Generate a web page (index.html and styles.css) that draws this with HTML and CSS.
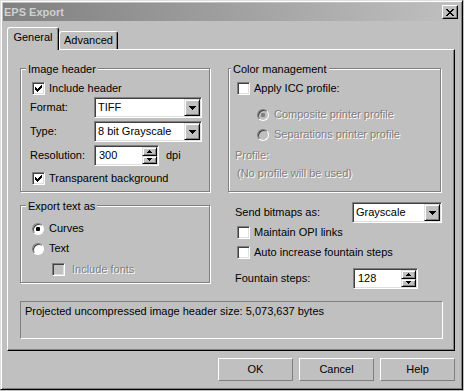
FILE: index.html
```html
<!DOCTYPE html>
<html lang="en">
<head>
  <meta charset="UTF-8">
  <title>EPS Export</title>
  <link rel="stylesheet" href="styles.css">
</head>
<body>

  <div class="window">
    <div class="titlebar">
      <span class="title">EPS Export</span>
      <span class="close-btn">
        <svg width="8" height="7" viewBox="0 0 8 7"><path d="M0 0h2v1H0zM6 0h2v1H6zM1 1h2v1H1zM5 1h2v1H5zM2 2h4v1H2zM3 3h2v1H3zM2 4h4v1H2zM1 5h2v1H1zM5 5h2v1H5zM0 6h2v1H0zM6 6h2v1H6z"/></svg>
      </span>
    </div>

    <div class="tabs">
      <div class="tab active">General</div>
      <div class="tab">Advanced</div>
    </div>

    <div class="panel">
      <div class="columns">

        <!-- left column -->
        <div class="col">
          <div class="group group-image">
            <div class="group-title">Image header</div>
            <div class="check-row gap-6">
              <span class="check"><svg width="11" height="11" viewBox="1 1 11 11"><path d="M3 5h1v3H3zM4 6h1v3H4zM5 7h1v3H5zM6 6h1v3H6zM7 5h1v3H7zM8 4h1v3H8zM9 3h1v3H9z"/></svg></span>
              <span>Include header</span>
            </div>
            <div class="field-row first">
              <span class="field-label">Format:</span>
              <div class="combo w-108">
                <span class="combo-text">TIFF</span>
                <span class="drop-btn"><svg width="7" height="4" viewBox="0 0 7 4"><path d="M0 0h7v1H0zM1 1h5v1H1zM2 2h3v1H2zM3 3h1v1H3z"/></svg></span>
              </div>
            </div>
            <div class="field-row">
              <span class="field-label">Type:</span>
              <div class="combo w-108">
                <span class="combo-text">8 bit Grayscale</span>
                <span class="drop-btn"><svg width="7" height="4" viewBox="0 0 7 4"><path d="M0 0h7v1H0zM1 1h5v1H1zM2 2h3v1H2zM3 3h1v1H3z"/></svg></span>
              </div>
            </div>
            <div class="field-row">
              <span class="field-label">Resolution:</span>
              <div class="spin">
                <span class="spin-text">300</span>
                <span class="spin-btns">
                  <span class="spin-btn"><svg width="5" height="3" viewBox="0 0 5 3"><path d="M2 0h1v1H2zM1 1h3v1H1zM0 2h5v1H0z"/></svg></span>
                  <span class="spin-btn"><svg width="5" height="3" viewBox="0 0 5 3"><path d="M0 0h5v1H0zM1 1h3v1H1zM2 2h1v1H2z"/></svg></span>
                </span>
              </div>
              <span class="unit">dpi</span>
            </div>
            <div class="check-row gap-6">
              <span class="check"><svg width="11" height="11" viewBox="1 1 11 11"><path d="M3 5h1v3H3zM4 6h1v3H4zM5 7h1v3H5zM6 6h1v3H6zM7 5h1v3H7zM8 4h1v3H8zM9 3h1v3H9z"/></svg></span>
              <span>Transparent background</span>
            </div>
          </div>

          <div class="group group-text">
            <div class="group-title">Export text as</div>
            <div class="radio-row gap-9">
              <span class="radio"><span class="dot"></span></span>
              <span>Curves</span>
            </div>
            <div class="radio-row gap-7">
              <span class="radio"></span>
              <span>Text</span>
            </div>
            <div class="check-row fonts-row">
              <span class="check disabled"></span>
              <span class="disabled-text">Include fonts</span>
            </div>
          </div>
        </div>

        <!-- right column -->
        <div class="col">
          <div class="group group-color">
            <div class="group-title">Color management</div>
            <div class="check-row gap-6">
              <span class="check"></span>
              <span>Apply ICC profile:</span>
            </div>
            <div class="radio-row indent gap-13">
              <span class="radio disabled"><span class="dot"></span></span>
              <span class="disabled-text">Composite printer profile</span>
            </div>
            <div class="radio-row indent gap-7">
              <span class="radio disabled"></span>
              <span class="disabled-text">Separations printer profile</span>
            </div>
            <div class="disabled-text profile-label">Profile:</div>
            <div class="disabled-text profile-note">(No profile will be used)</div>
          </div>

          <div class="right-row send-row">
            <span class="right-label">Send bitmaps as:</span>
            <div class="combo w-90">
              <span class="combo-text">Grayscale</span>
              <span class="drop-btn"><svg width="7" height="4" viewBox="0 0 7 4"><path d="M0 0h7v1H0zM1 1h5v1H1zM2 2h3v1H2zM3 3h1v1H3z"/></svg></span>
            </div>
          </div>
          <div class="check-row right-check gap-3">
            <span class="check"></span>
            <span>Maintain OPI links</span>
          </div>
          <div class="check-row right-check gap-7">
            <span class="check"></span>
            <span>Auto increase fountain steps</span>
          </div>
          <div class="right-row steps-row">
            <span class="right-label wide">Fountain steps:</span>
            <div class="spin">
              <span class="spin-text">128</span>
              <span class="spin-btns">
                <span class="spin-btn"><svg width="5" height="3" viewBox="0 0 5 3"><path d="M2 0h1v1H2zM1 1h3v1H1zM0 2h5v1H0z"/></svg></span>
                <span class="spin-btn"><svg width="5" height="3" viewBox="0 0 5 3"><path d="M0 0h5v1H0zM1 1h3v1H1zM2 2h1v1H2z"/></svg></span>
              </span>
            </div>
          </div>
        </div>

      </div>

      <div class="info">Projected uncompressed image header size: 5,073,637 bytes</div>
    </div>

    <div class="buttons">
      <button class="btn">OK</button>
      <button class="btn">Cancel</button>
      <button class="btn">Help</button>
    </div>
  </div>

</body>
</html>
```

FILE: styles.css
```css
body {
  margin: 0;
  background: #c0c0c0;
  font-family: "Liberation Sans", Arial, sans-serif;
  font-size: 11px;
  line-height: 13px;
  color: #000;
}

.window {
  width: 463px;
  height: 390px;
  box-sizing: border-box;
  padding: 2px;
  border: 1px solid;
  border-color: #dfdfdf #000 #000 #dfdfdf;
  box-shadow: inset 1px 1px 0 #fff, inset -1px -1px 0 #808080;
}

.titlebar {
  height: 18px;
  display: flex;
  align-items: center;
  justify-content: space-between;
  padding-right: 2px;
  background: linear-gradient(to right, #808080, #c0c0c0);
}

.title {
  font-weight: bold;
  color: #d0d0d0;
  padding-left: 1px;
}

.close-btn {
  width: 16px;
  height: 14px;
  box-sizing: border-box;
  display: flex;
  align-items: center;
  justify-content: center;
  background: #c0c0c0;
  border: 1px solid;
  border-color: #fff #000 #000 #fff;
  box-shadow: inset -1px -1px 0 #808080;
}

.close-btn svg {
  display: block;
}

/* tabs */
.tabs {
  display: flex;
  align-items: flex-end;
  height: 22px;
  margin: 6px 0 0 4px;
}

.tab {
  width: 59px;
  height: 18px;
  box-sizing: border-box;
  padding-top: 2px;
  border: 1px solid;
  border-bottom: none;
  border-color: #fff #000 #000 #fff;
  border-radius: 3px 3px 0 0;
  box-shadow: inset -1px 0 0 #808080;
  text-align: center;
}

.tab.active {
  width: 52px;
  height: 23px;
  margin-bottom: -1px;
  padding-top: 3px;
  position: relative;
  z-index: 1;
  background: #c0c0c0;
}

.panel {
  width: 448px;
  height: 302px;
  box-sizing: border-box;
  margin-left: 4px;
  padding: 18px 0 0 12px;
  border: 1px solid;
  border-color: #fff #000 #000 #fff;
  box-shadow: inset -1px -1px 0 #808080;
}

.columns {
  display: grid;
  grid-template-columns: 191px 214px;
  column-gap: 17px;
  align-items: start;
}

/* group boxes */
.group {
  box-sizing: border-box;
  border: 1px solid #808080;
  box-shadow: 1px 1px 0 #fff, inset 1px 1px 0 #fff;
}

.group-title {
  display: table;
  margin: -6px 0 0 -4px;
  padding: 0 2px;
  background: #c0c0c0;
}

.group-image {
  width: 190px;
  height: 124px;
  padding-left: 9px;
}

.group-text {
  width: 190px;
  height: 78px;
  margin-top: 13px;
  padding-left: 9px;
}

.group-color {
  width: 213px;
  height: 124px;
  padding-left: 6px;
}

/* checkboxes and radios */
.check-row,
.radio-row {
  display: flex;
  align-items: center;
  height: 13px;
}

.check-row {
  gap: 4px;
}

.radio-row {
  gap: 5px;
  padding-left: 2px;
}

.radio-row.indent {
  padding-left: 22px;
}

.gap-3 { margin-top: 3px; }
.gap-6 { margin-top: 6px; }
.gap-7 { margin-top: 7px; }
.gap-9 { margin-top: 9px; }
.gap-13 { margin-top: 13px; }

.fonts-row {
  margin-top: 8px;
  padding-left: 20px;
  gap: 7px;
}

.check {
  width: 13px;
  height: 13px;
  flex: none;
  box-sizing: border-box;
  margin-left: 2px;
  background: #fff;
  border: 1px solid;
  border-color: #808080 #fff #fff #808080;
  box-shadow: inset 1px 1px 0 #404040, inset -1px -1px 0 #dfdfdf;
}

.check svg {
  display: block;
}

.check.disabled {
  background: #c0c0c0;
}

.radio {
  width: 12px;
  height: 12px;
  flex: none;
  box-sizing: border-box;
  display: flex;
  align-items: center;
  justify-content: center;
  border-radius: 50%;
  background: #fff;
  border: 1px solid;
  border-color: #808080 #fff #fff #808080;
  box-shadow: inset 1px 1px 0 #404040;
}

.radio.disabled {
  background: #c0c0c0;
}

.dot {
  width: 4px;
  height: 4px;
  border-radius: 1px;
  background: #000;
}

.radio.disabled .dot {
  background: #808080;
}

.disabled-text {
  color: #808080;
  text-shadow: 1px 1px 0 #fff;
}

.profile-label {
  margin-top: 8px;
}

.profile-note {
  margin-top: 5px;
  padding-left: 2px;
}

/* fields */
.field-row {
  display: flex;
  align-items: center;
  height: 21px;
  margin-top: 3px;
}

.field-row.first {
  margin-top: 2px;
}

.field-label {
  width: 64px;
  flex: none;
}

.combo,
.spin {
  height: 21px;
  box-sizing: border-box;
  display: flex;
  padding: 1px;
  background: #fff;
  border: 1px solid;
  border-color: #808080 #fff #fff #808080;
  box-shadow: inset 1px 1px 0 #404040, inset -1px -1px 0 #dfdfdf;
}

.w-108 { width: 108px; }
.w-90 { width: 90px; }

.combo-text,
.spin-text {
  flex: 1;
  align-self: center;
  padding-left: 2px;
  white-space: nowrap;
}

.spin {
  width: 65px;
}

.spin-text {
  padding-left: 3px;
}

.drop-btn,
.spin-btn {
  box-sizing: border-box;
  display: flex;
  align-items: center;
  justify-content: center;
  background: #c0c0c0;
  border: 1px solid;
  border-color: #dfdfdf #000 #000 #dfdfdf;
  box-shadow: inset 1px 1px 0 #fff, inset -1px -1px 0 #808080;
}

.drop-btn {
  width: 16px;
  flex: none;
}

.spin-btns {
  width: 15px;
  display: flex;
  flex-direction: column;
}

.spin-btn {
  flex: 1;
}

.drop-btn svg,
.spin-btn svg {
  display: block;
}

.unit {
  margin-left: 7px;
}

/* right column below the group */
.right-row {
  display: flex;
  align-items: center;
  padding-left: 7px;
}

.send-row {
  margin-top: 10px;
}

.steps-row {
  margin-top: 9px;
}

.right-label {
  width: 117px;
  flex: none;
}

.right-label.wide {
  width: 118px;
}

.right-check {
  padding-left: 7px;
}

/* info line */
.info {
  width: 423px;
  height: 38px;
  box-sizing: border-box;
  margin-top: 12px;
  padding: 3px 0 0 4px;
  border: 1px solid;
  border-color: #808080 #fff #fff #808080;
}

/* dialog buttons */
.buttons {
  display: flex;
  justify-content: flex-end;
  gap: 6px;
  margin-top: 7px;
  padding-right: 5px;
}

.btn {
  width: 75px;
  height: 23px;
  box-sizing: border-box;
  padding: 0;
  font: inherit;
  color: #000;
  background: #c0c0c0;
  border: 1px solid;
  border-color: #fff #808080 #808080 #fff;
}
```
